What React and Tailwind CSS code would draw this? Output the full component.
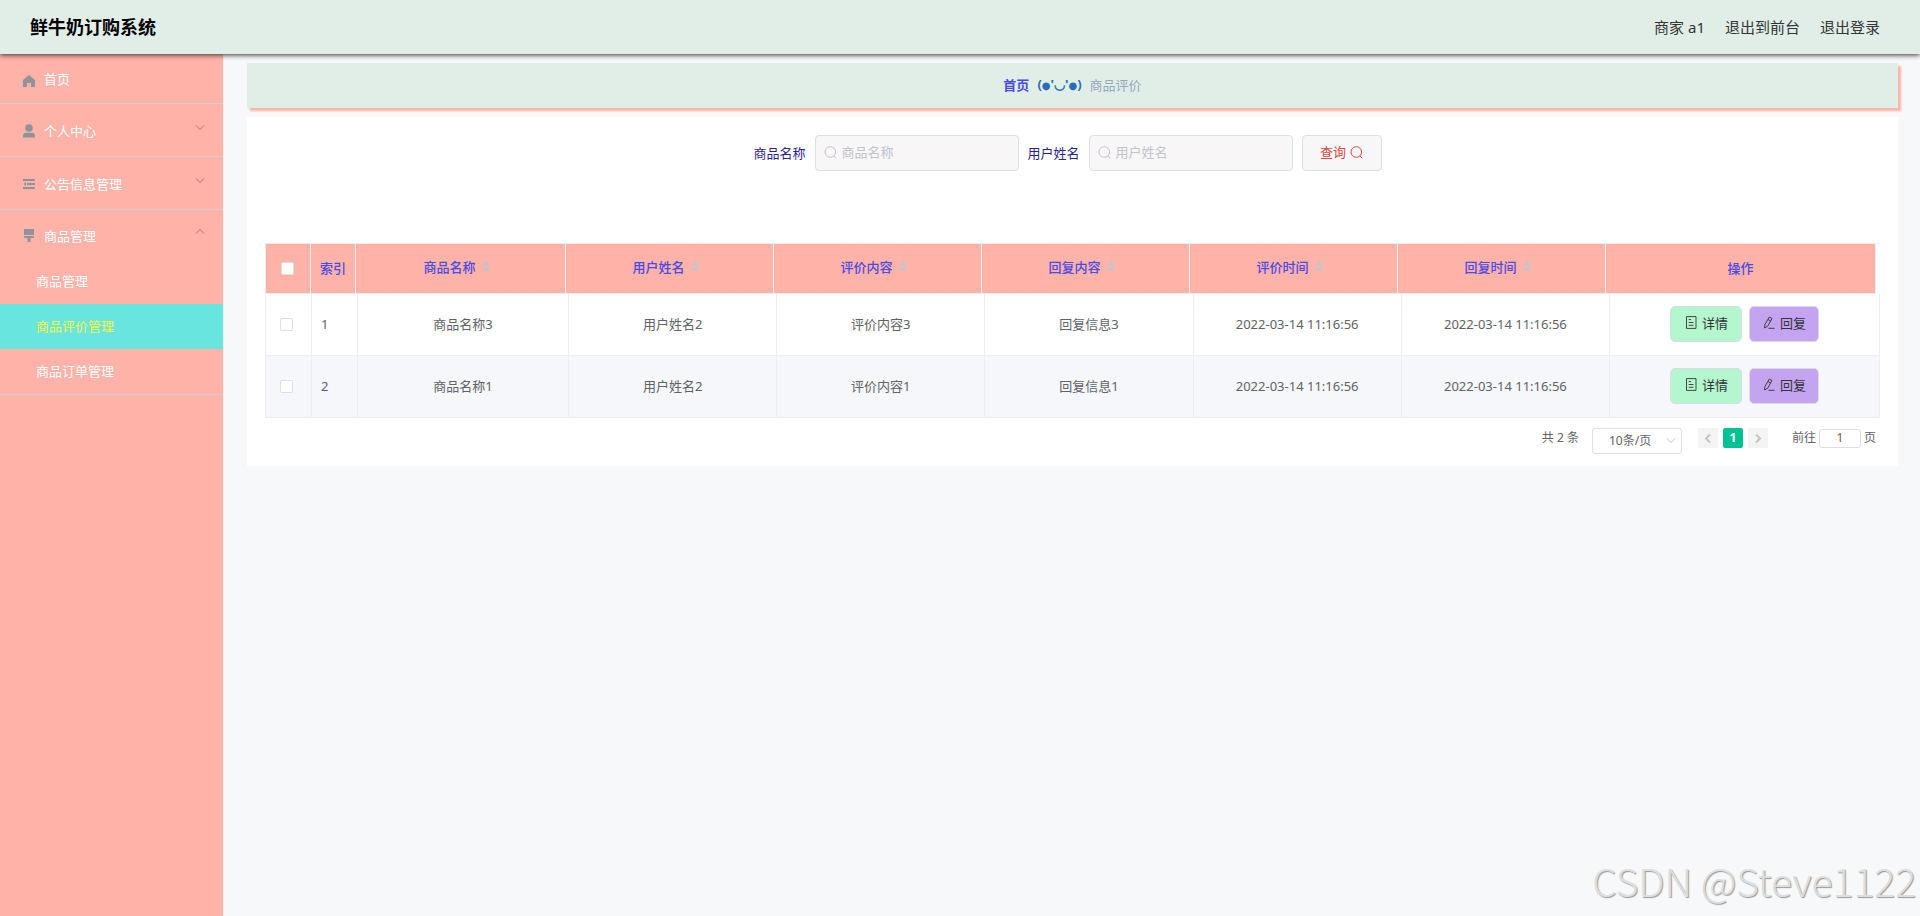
import React from 'react'

const menu = [
  { label: '个人中心', icon: UserIcon },
  { label: '公告信息管理', icon: FoldIcon },
]

const subMenu = [
  { label: '商品管理' },
  { label: '商品评价管理', active: true },
  { label: '商品订单管理' },
]

const sortable = ['商品名称', '用户姓名', '评价内容', '回复内容', '评价时间', '回复时间']

const rows = [
  { id: 1, cells: ['商品名称3', '用户姓名2', '评价内容3', '回复信息3', '2022-03-14 11:16:56', '2022-03-14 11:16:56'] },
  { id: 2, cells: ['商品名称1', '用户姓名2', '评价内容1', '回复信息1', '2022-03-14 11:16:56', '2022-03-14 11:16:56'] },
]

function HomeIcon() {
  return (
    <svg className="w-3 h-3 shrink-0" viewBox="0 0 12 12" fill="currentColor" aria-hidden="true">
      <path d="M6 0 12 5v7H8V8.4a.4.4 0 0 0-.4-.4H4.4a.4.4 0 0 0-.4.4V12H0V5z" />
    </svg>
  )
}

function UserIcon() {
  return (
    <svg className="w-3 h-[14px] shrink-0" viewBox="0 0 12 14" fill="currentColor" aria-hidden="true">
      <circle cx="6" cy="4" r="3.8" />
      <path d="M3 8.8h6a3 3 0 0 1 3 3V13.6H0v-1.800a3 3 0 0 1 3-3z" />
    </svg>
  )
}

function FoldIcon() {
  return (
    <svg className="w-3 h-[10px] shrink-0" viewBox="0 0 12 10" fill="currentColor" aria-hidden="true">
      <path d="M0 0h12v2H0zM4 4h8v2H4zM0 8h12v2H0zM3 3v4L.6 5z" />
    </svg>
  )
}

function BrushIcon() {
  return (
    <svg className="w-3 h-[14px] shrink-0" viewBox="0 0 12 14" fill="currentColor" aria-hidden="true">
      <path d="M1 0h10v6H1zM1 7h10v1a1 1 0 0 1-1 1H7.500v4h-3V9H2a1 1 0 0 1-1-1z" />
    </svg>
  )
}

function Chevron({ className, d = 'M1 1.500 5 5.500 9 1.500' }) {
  return (
    <svg className={className} viewBox="0 0 10 7" fill="none" stroke="currentColor" aria-hidden="true">
      <path d={d} />
    </svg>
  )
}

function SearchIcon({ className }) {
  return (
    <svg className={className} viewBox="0 0 13 13" fill="none" stroke="currentColor" aria-hidden="true">
      <circle cx="6.300" cy="6" r="5.300" />
      <path d="m9.900 9.900 2.300 2.300" />
    </svg>
  )
}

function SortIcon() {
  return (
    <svg className="w-2 h-[11px] text-[#c0c4cc]" viewBox="0 0 8 11" fill="currentColor" aria-hidden="true">
      <path d="M4 0 8 4.500H0zM4 11 0 6.500h8z" />
    </svg>
  )
}

function DocumentIcon() {
  return (
    <svg className="w-[13px] h-[13px]" viewBox="0 0 13 13" fill="none" stroke="currentColor" strokeWidth="0.9" aria-hidden="true">
      <path d="M1.500 .6h9.500v11.800H1.500zM3.700 3.600h2.400M3.700 6.500h4.800M3.700 9.300h4.800" />
    </svg>
  )
}

function EditIcon() {
  return (
    <svg className="w-[13px] h-[13px]" viewBox="0 0 13 13" fill="none" stroke="currentColor" strokeWidth="0.9" aria-hidden="true">
      <path d="M6.300 1 9 2.500 4.700 10.200 1.600 12 1.800 8.700zM5 3.500l2.700 1.500M5.500 12.300h6" />
    </svg>
  )
}

function SearchField({ id, label }) {
  return (
    <div className="flex items-center">
      <label htmlFor={id} className="pr-[9px] text-[#2a1f96]">{label}</label>
      <div className="relative">
        <input
          id={id}
          type="text"
          placeholder={label}
          className="block w-[204px] h-9 pl-[26px] pr-3 pb-[2px] rounded border border-[#dcdfe6] bg-[#f8f6f7] text-[13px] placeholder:text-[#c0c4cc] outline-none"
        />
        <SearchIcon className="absolute left-[9px] top-[11px] w-[13px] h-[13px] text-[#c0c4cc]" />
      </div>
    </div>
  )
}

function Check({ label }) {
  return (
    <input
      type="checkbox"
      aria-label={label}
      className="block appearance-none w-[13px] h-[13px] rounded-xs border border-[#dcdfe6] bg-white"
    />
  )
}

function Columns({ small }) {
  return (
    <colgroup>
      <col className={small ? 'w-[45px]' : 'w-[46px]'} />
      <col className={small ? 'w-[45px]' : 'w-[46px]'} />
      <col className={small ? 'w-[210px]' : 'w-[211px]'} />
      <col />
      <col />
      <col />
      <col />
      <col />
      <col className="w-[270px]" />
    </colgroup>
  )
}

function Header() {
  return (
    <header className="relative z-10 flex items-center justify-between h-[54px] pl-[30px] pr-10 bg-[#e0eee7] shadow-[0_1px_5px_#333]">
      <h1 className="text-lg font-bold text-black">鲜牛奶订购系统</h1>
      <nav className="flex gap-5 text-[15px] text-[#333]">
        <span>商家 a1</span>
        <a href="#front">退出到前台</a>
        <a href="#logout">退出登录</a>
      </nav>
    </header>
  )
}

function Sidebar() {
  return (
    <aside className="w-56 shrink-0 bg-[#ffb2a7] border-r border-[#eceef0] text-white">
      <a href="#home" className="flex items-center gap-[9px] h-[50px] pl-[23px] border-b border-[#d3cfce]">
        <span className="pt-1 text-[#909399]"><HomeIcon /></span>
        首页
      </a>
      {menu.map(({ label, icon: Icon }) => (
        <button key={label} type="button" className="flex items-center gap-[9px] w-full h-[53px] pl-[23px] pr-[18px] pt-[2px] border-b border-[#d3cfce]">
          <span className="text-[#909399]"><Icon /></span>
          {label}
          <Chevron className="ml-auto mb-2 w-[10px] h-[7px] text-[#f25b5b]" />
        </button>
      ))}
      <div className="border-b border-[#d3cfce]">
        <button type="button" className="flex items-center gap-[9px] w-full h-[49px] pl-[23px] pr-[18px] pt-[2px]">
          <span className="text-[#909399]"><BrushIcon /></span>
          商品管理
          <Chevron className="ml-auto mb-2 w-[10px] h-[7px] text-[#f25b5b]" d="M1 5.500 5 1.500 9 5.500" />
        </button>
        {subMenu.map((item) => (
          <a
            key={item.label}
            href="#goods"
            className={`flex items-center h-[45px] pl-9 pb-[2px] ${item.active ? 'bg-[#69e5e0] text-[#f4f43a]' : ''}`}
          >
            {item.label}
          </a>
        ))}
      </div>
    </aside>
  )
}

function ReviewTable() {
  return (
    <div className="border-t border-l border-[#ebeef5] text-[#606266]">
      <div className="pr-1">
        <table className="w-full table-fixed border-separate border-spacing-0">
          <Columns small />
          <thead>
            <tr className="h-[50px] bg-[#ffb2a7] text-[#4a4ae6] *:border-r *:border-b *:border-[#ebeef5] *:px-0 *:pt-0 *:pb-[2px] *:font-medium">
              <th><div className="pt-[2px] pl-[15px]"><Check label="全选" /></div></th>
              <th>索引</th>
              {sortable.map((title) => (
                <th key={title}>
                  <div className="flex items-center justify-center gap-[6px] pr-2 pb-[2px]">
                    {title}
                    <SortIcon />
                  </div>
                </th>
              ))}
              <th>操作</th>
            </tr>
          </thead>
        </table>
      </div>

      <table className="w-full table-fixed border-separate border-spacing-0">
        <Columns />
        <tbody>
          {rows.map((row) => (
            <tr key={row.id} className="h-[62px] text-center even:bg-[#f5f7fb] *:border-r *:border-b *:border-[#ebeef5] *:px-0 *:pt-0 *:pb-[2px]">
              <td><div className="pt-[2px] pl-[14px]"><Check label={`选择 ${row.id}`} /></div></td>
              <td><div className="pl-[9px] text-left">{row.id}</div></td>
              {row.cells.map((cell, i) => (
                <td key={i}>{cell}</td>
              ))}
              <td>
                <div className="flex justify-center gap-[7px] text-[#333]">
                  <button type="button" className="flex items-center gap-1 h-9 pl-[14px] pr-[13px] pb-[2px] rounded-[5px] border border-[#d9dde3] bg-[#b4f7ce]">
                    <DocumentIcon />
                    详情
                  </button>
                  <button type="button" className="flex items-center gap-1 h-9 pl-[13px] pr-3 pb-[2px] rounded-[5px] border border-[#d9dde3] bg-[#c4a3f0]">
                    <EditIcon />
                    回复
                  </button>
                </div>
              </td>
            </tr>
          ))}
        </tbody>
      </table>
    </div>
  )
}

function Pagination() {
  return (
    <div className="flex items-start justify-end pt-[10px] pr-1 text-xs leading-5 text-[#606266]">
      <span className="mr-[13px]">共 2 条</span>
      <div className="relative mr-4">
        <select
          aria-label="每页条数"
          className="block appearance-none w-[90px] h-[26px] pl-4 rounded-[3px] border border-[#dcdfe6] bg-white text-xs outline-none"
        >
          <option>10条/页</option>
        </select>
        <Chevron className="absolute right-[6px] top-[9px] w-[10px] h-[7px] text-[#c0c4cc]" />
      </div>
      <div className="flex gap-[5px] mr-6">
        <button type="button" aria-label="上一页" className="flex items-center justify-center w-5 h-5 rounded-xs bg-[#f4f4f5] text-[#c0c4cc]">
          <Chevron className="w-[10px] h-[7px] rotate-90 stroke-2" />
        </button>
        <button type="button" className="w-5 h-5 rounded-xs bg-[#00c292] font-bold leading-5 text-white">1</button>
        <button type="button" aria-label="下一页" className="flex items-center justify-center w-5 h-5 rounded-xs bg-[#f4f4f5] text-[#c0c4cc]">
          <Chevron className="w-[10px] h-[7px] -rotate-90 stroke-2" />
        </button>
      </div>
      <label className="flex items-center">
        前往
        <input type="text" defaultValue="1" className="w-[42px] h-[19px] mx-[3px] rounded-[3px] border border-[#dcdfe6] bg-white text-center outline-none" />
        页
      </label>
    </div>
  )
}

export default function App() {
  return (
    <div className="relative flex flex-col min-h-screen bg-[#f7f8fa] font-['Noto_Sans','Noto_Sans_CJK_SC',sans-serif] text-[13px] leading-5">
      <Header />
      <div className="flex flex-1">
        <Sidebar />
        <main className="flex-1 min-w-0 pt-[9px] pl-[23px] pr-[22px]">
          {/* Breadcrumb */}
          <nav className="flex items-center justify-center gap-2 h-[45px] pb-[2px] bg-[#e0eee7] shadow-[3px_3px_2px_#ffb2a7]">
            <a href="#home" className="font-bold text-[#4a4ae0]">首页</a>
            <span className="font-bold text-[#2a6fb5]">
              (<span className="font-['DejaVu_Sans',sans-serif] text-[10px]">●</span>
              '◡'
              <span className="font-['DejaVu_Sans',sans-serif] text-[10px]">●</span>)
            </span>
            <span className="text-[#97a8be]">商品评价</span>
          </nav>

          <section className="mt-[9px] px-[18px] pt-[18px] pb-3 bg-white">
            <form className="flex justify-center gap-[9px] pr-[10px] mb-[72px]">
              <SearchField id="goods-name" label="商品名称" />
              <SearchField id="user-name" label="用户姓名" />
              <button type="button" className="flex items-center justify-center gap-1 w-20 h-9 pb-[2px] rounded border border-[#dcdfe6] bg-[#f8f6f7] text-[#de4747]">
                查询
                <SearchIcon className="w-[13px] h-[13px]" />
              </button>
            </form>
            <ReviewTable />
            <Pagination />
          </section>
        </main>
      </div>

      {/* Watermark */}
      <div className="absolute right-1 bottom-3 font-['Noto_Sans_CJK_SC',sans-serif] font-light text-[39px] leading-[48px] text-[#dcdedf] [text-shadow:1px_1px_1px_#999]">
        CSDN @Steve1122
      </div>
    </div>
  )
}
